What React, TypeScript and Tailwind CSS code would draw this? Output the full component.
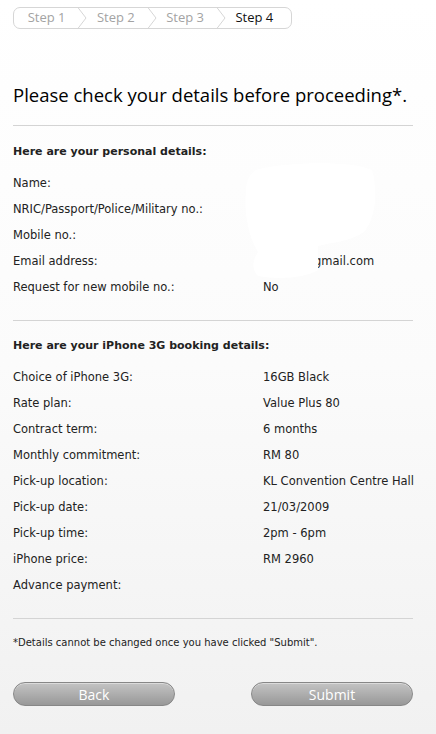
const personal: [string, string][] = [
  ["Name:", ""],
  ["NRIC/Passport/Police/Military no.:", ""],
  ["Mobile no.:", ""],
  ["Email address:", "gmail.com"],
  ["Request for new mobile no.:", "No"],
];

const booking: [string, string][] = [
  ["Choice of iPhone 3G:", "16GB Black"],
  ["Rate plan:", "Value Plus 80"],
  ["Contract term:", "6 months"],
  ["Monthly commitment:", "RM 80"],
  ["Pick-up location:", "KL Convention Centre Hall"],
  ["Pick-up date:", "21/03/2009"],
  ["Pick-up time:", "2pm - 6pm"],
  ["iPhone price:", "RM 2960"],
  ["Advance payment:", ""],
];

const steps = ["Step 1", "Step 2", "Step 3", "Step 4"];

function Stepper() {
  return (
    <div className="flex h-[22px] w-[279px] rounded-[7px] border border-[#d6d6d6] bg-white font-['Open_Sans',sans-serif] text-[13px]">
      {steps.map((s, i) => (
        <div key={s} className="relative flex flex-1 items-center justify-center pr-[4px]">
          <span className={i === 3 ? "text-[#111]" : "text-[#a3a3a3]"}>{s}</span>
          {i < 3 && (
            <svg className="absolute right-[-4px] top-[-1px]" width="10" height="22" viewBox="0 0 10 22">
              <path d="M0.5 0 L9 11 L0.5 22" fill="none" stroke="#d6d6d6" strokeWidth="1" />
            </svg>
          )}
        </div>
      ))}
    </div>
  );
}

function Rows({ rows }: { rows: [string, string][] }) {
  return (
    <div className="mt-[11px] flex flex-col text-[11.5px]">
      {rows.map(([label, value]) => (
        <div key={label} className="flex h-[26px] items-center">
          <div className="w-[250px] shrink-0">{label}</div>
          <div className={label === "Email address:" ? "pl-[51px]" : ""}>{value}</div>
        </div>
      ))}
    </div>
  );
}

function PillButton({ label }: { label: string }) {
  return (
    <button className="h-[24px] w-[162px] rounded-full border border-[#878787] bg-gradient-to-b from-[#c4c4c4] to-[#989898] font-['Open_Sans',sans-serif] text-[14px] text-white shadow-[inset_0_1px_0_rgba(255,255,255,0.4)]">
      {label}
    </button>
  );
}

export default function App() {
  return (
    <div className="relative h-[734px] w-[436px] overflow-hidden bg-gradient-to-b from-white via-[#fbfbfb] to-[#f1f1f1] px-[13px] pt-[7px] font-['DejaVu_Sans',sans-serif] text-[11px] text-[#222]">
      <Stepper />

      <h1 className="mt-[52px] h-[28px] font-['Open_Sans',sans-serif] text-[18.5px] leading-[28px] text-black">
        Please check your details before proceeding*.
      </h1>

      <div className="mt-[16px] h-px w-[400px] bg-[#d4d4d4]" />

      <h2 className="mt-[18px] h-[16px] font-bold leading-[16px]">Here are your personal details:</h2>
      <Rows rows={personal} />

      <div className="mt-[19px] h-px w-[400px] bg-[#d4d4d4]" />

      <h2 className="mt-[17px] h-[16px] font-bold leading-[16px]">Here are your iPhone 3G booking details:</h2>
      <Rows rows={booking} />

      <div className="mt-[19px] h-px w-[400px] bg-[#d4d4d4]" />

      <p className="mt-[17px] h-[14px] text-[10px] leading-[14px]">
        *Details cannot be changed once you have clicked "Submit".
      </p>

      <div className="mt-[32px] flex w-[400px] justify-between">
        <PillButton label="Back" />
        <PillButton label="Submit" />
      </div>

      {/* redaction blob over personal values */}
      <svg className="pointer-events-none absolute left-[242px] top-[162px]" width="136" height="118" viewBox="0 0 136 118">
        <path
          d="M14 8 C40 0 110 -2 130 8 C136 28 134 56 122 70 C108 80 90 80 76 84 L76 108 C64 116 36 118 16 114 C8 106 12 96 16 90 C6 74 2 50 4 30 C4 18 8 12 14 8 Z"
          fill="#ffffff"
        />
      </svg>
    </div>
  );
}
